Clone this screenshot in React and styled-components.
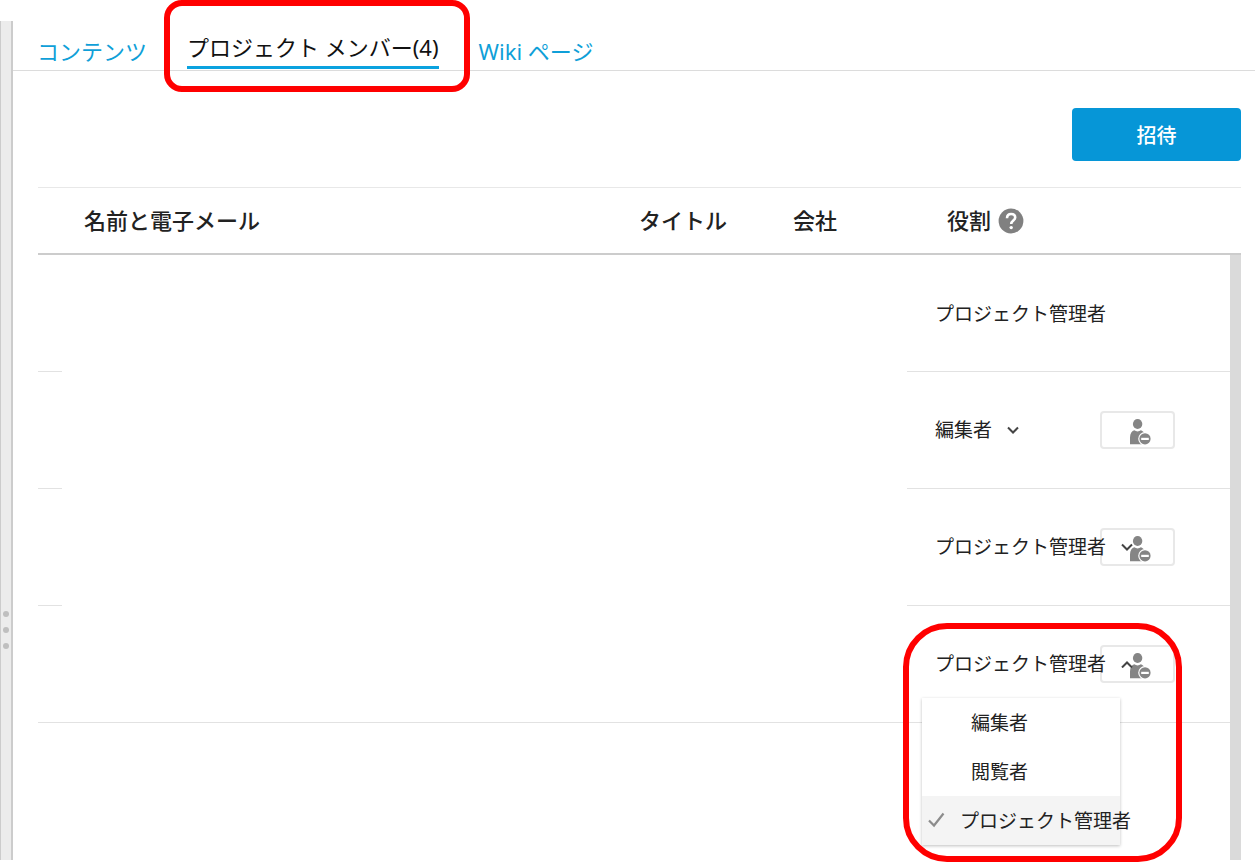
import { useState } from "react"
import styled, { createGlobalStyle, css } from "styled-components"

const ROLES = ["編集者", "閲覧者", "プロジェクト管理者"]

const MEMBERS = [
  { id: 1, role: "プロジェクト管理者", owner: true },
  { id: 2, role: "編集者" },
  { id: 3, role: "プロジェクト管理者" },
  { id: 4, role: "プロジェクト管理者", marked: true },
]

const Chevron = ({ up }) => (
  <svg width="12" height="8" viewBox="0 0 12 8" fill="none" stroke="#444" strokeWidth="2" aria-hidden="true">
    <path d={up ? "M1 7.5 L6 2.5 L11 7.5" : "M1 1.5 L6 6.5 L11 1.5"} />
  </svg>
)

const RemoveIcon = () => (
  <svg width="26" height="30" viewBox="0 0 26 30" aria-hidden="true">
    <ellipse cx="12.6" cy="9" rx="4.7" ry="5.1" fill="#858585" />
    <path d="M5 29.3 V22.5 C5 18.3 7 16 9.3 15.3 C11.2 16.8 14 16.8 15.9 15.3 C18 16 19.5 17.8 19.8 20 V29.3 Z" fill="#858585" />
    <circle cx="20" cy="23.8" r="6.8" fill="#fff" />
    <circle cx="20" cy="23.8" r="5.6" fill="#858585" />
    <rect x="16.2" y="22.8" width="7.6" height="2.2" fill="#fff" />
  </svg>
)

const HelpIcon = () => (
  <svg width="26" height="26" viewBox="0 0 26 26" aria-hidden="true">
    <circle cx="13" cy="13" r="12.4" fill="#808080" />
    <path d="M9 10.2 C9 7.4 10.6 6 13.1 6 C15.6 6 17.2 7.4 17.2 9.5 C17.2 12.4 13.2 12.6 13.2 16" fill="none" stroke="#fff" strokeWidth="2.6" />
    <circle cx="13.2" cy="19.6" r="1.7" fill="#fff" />
  </svg>
)

const CheckIcon = () => (
  <svg width="17" height="16" viewBox="0 0 17 16" fill="none" stroke="#8c8c8c" strokeWidth="2.2" aria-hidden="true">
    <path d="M1 8.5 L6 13.5 L15.5 1.5" />
  </svg>
)

const RolePicker = ({ member, open, onToggle, onPick }) => (
  <Picker>
    <PickerLabel>
      <RoleSelect
        aria-label="役割"
        value={member.role}
        onMouseDown={(e) => {
          e.preventDefault()
          onToggle()
        }}
        onChange={(e) => onPick(e.target.value)}
      >
        {ROLES.map((role) => <option key={role}>{role}</option>)}
      </RoleSelect>
      <Chevron up={open} />
    </PickerLabel>
    {open && (
      <Menu role="listbox" aria-label="役割">
        {ROLES.map((role) => (
          <li key={role}>
            <MenuItem
              type="button"
              role="option"
              aria-selected={role === member.role}
              $selected={role === member.role}
              onClick={() => onPick(role)}
            >
              {role === member.role && <CheckIcon />}
              {role}
            </MenuItem>
          </li>
        ))}
      </Menu>
    )}
  </Picker>
)

const Columns = () => (
  <colgroup>
    <Col $width={24} />
    <Col />
    <Col $width={154} />
    <Col $width={136} />
    <Col $width={323} />
  </colgroup>
)

const App = () => {
  const [members, setMembers] = useState(MEMBERS)
  const [openId, setOpenId] = useState(4)

  const pick = (id, role) => {
    setMembers(members.map((m) => (m.id === id ? { ...m, role } : m)))
    setOpenId(null)
  }

  return (
    <>
      <GlobalStyle />
      <Page>
        <Splitter>
          <i />
          <i />
          <i />
        </Splitter>
        <Main>
          <Tabs>
            <Tab href="#contents">コンテンツ</Tab>
            <Tab href="#members" $active>
              プロジェクト メンバー({members.length})
              <TabMark />
            </Tab>
            <Tab href="#wiki">Wiki ページ</Tab>
          </Tabs>
          <Content>
            <Toolbar>
              <InviteButton type="button">招待</InviteButton>
            </Toolbar>
            <HeadWrap>
              <Table>
                <Columns />
                <thead>
                  <tr>
                    <HeadCell />
                    <HeadCell>名前と電子メール</HeadCell>
                    <HeadCell>タイトル</HeadCell>
                    <HeadCell>会社</HeadCell>
                    <HeadCell $wide>
                      <HeadLabel>
                        役割
                        <HelpButton type="button" aria-label="ヘルプ">
                          <HelpIcon />
                        </HelpButton>
                      </HeadLabel>
                    </HeadCell>
                  </tr>
                </thead>
              </Table>
            </HeadWrap>
            <BodyWrap>
              <Rows>
                <Table>
                  <Columns />
                  <tbody>
                    {members.map((m, i) => (
                      <tr key={m.id}>
                        <Cell $line />
                        <Cell $line={i === members.length - 1} />
                        <Cell $line={i === members.length - 1} />
                        <Cell $line={i === members.length - 1} />
                        <Cell $line>
                          <RoleRow>
                            {m.owner ? (
                              m.role
                            ) : (
                              <>
                                <RolePicker
                                  member={m}
                                  open={openId === m.id}
                                  onToggle={() => setOpenId(openId === m.id ? null : m.id)}
                                  onPick={(role) => pick(m.id, role)}
                                />
                                <RemoveButton type="button" aria-label="メンバーを削除">
                                  <RemoveIcon />
                                </RemoveButton>
                              </>
                            )}
                          </RoleRow>
                          {m.marked && <RoleMark />}
                        </Cell>
                      </tr>
                    ))}
                  </tbody>
                </Table>
              </Rows>
              <ScrollTrack />
            </BodyWrap>
          </Content>
        </Main>
      </Page>
    </>
  )
}

export default App

const GlobalStyle = createGlobalStyle`
* {
  box-sizing: border-box;
}

body {
  margin: 0;
  background: #fff;
  color: #222;
  font-family: "Noto Sans", "Noto Sans CJK JP", sans-serif;
  font-size: 19px;
}

button, select {
  font: inherit;
  color: inherit;
}
`

const Page = styled.div`
  display: flex;
  min-height: 100vh;
  padding: 21px 0 3px;
`

const Splitter = styled.div`
  display: flex;
  flex-direction: column;
  justify-content: flex-end;
  align-items: center;
  gap: 10px;
  flex: 0 0 13px;
  padding-bottom: 211px;
  background: #ececec;
  border-left: 1px solid #ccc;
  border-right: 2px solid #ccc;

  i {
    width: 6px;
    height: 6px;
    border-radius: 50%;
    background: #bfbfbf;
  }
`

const Main = styled.main`
  display: flex;
  flex-direction: column;
  flex: 1;
  min-width: 0;
`

const Tabs = styled.nav`
  display: flex;
  align-items: flex-end;
  gap: 40px;
  height: 50px;
  padding-left: 24px;
  border-bottom: 1px solid #dcdcdc;
`

const Tab = styled.a`
  position: relative;
  padding-bottom: 3px;
  color: #0f9fd8;
  font-size: 22px;
  line-height: 32px;
  white-space: nowrap;
  text-decoration: none;

  ${({ $active }) => $active && css`
    color: #111;
    border-bottom: 3px solid #0aa2df;
    margin-bottom: 1px;
  `}
`

/* red highlight frames */
const Mark = styled.span`
  position: absolute;
  border: 6px solid #f00;
  pointer-events: none;
`

const TabMark = styled(Mark)`
  inset: -31px -31px -26px -23px;
  border-radius: 18px;
`

const RoleMark = styled(Mark)`
  top: 17px;
  left: -4px;
  width: 279px;
  height: 239px;
  border-radius: 44px;
  z-index: 3;
`

const Content = styled.section`
  display: flex;
  flex-direction: column;
  flex: 1;
  padding: 0 14px 0 25px;
`

const Toolbar = styled.div`
  display: flex;
  justify-content: flex-end;
  padding: 37px 0 26px;
`

const InviteButton = styled.button`
  width: 169px;
  height: 53px;
  border: none;
  border-radius: 4px;
  background: #0696d7;
  color: #fff;
  font-size: 20px;
  font-weight: 500;
  cursor: pointer;
`

const Table = styled.table`
  width: 100%;
  table-layout: fixed;
  border-collapse: separate;
  border-spacing: 0;
`

const Col = styled.col`
  width: ${({ $width }) => ($width ? `${$width}px` : "auto")};
`

const HeadWrap = styled.div`
  padding-right: 11px;
  border-top: 1px solid #e8e8e8;
  border-bottom: 2px solid #ccc;
`

const HeadCell = styled.th`
  height: 65px;
  padding: 0 0 3px ${({ $wide }) => ($wide ? 40 : 22)}px;
  font-size: 22px;
  font-weight: 500;
  text-align: left;
  white-space: nowrap;
`

const HeadLabel = styled.span`
  display: flex;
  align-items: center;
  gap: 7px;
`

const HelpButton = styled.button`
  display: flex;
  padding: 3px 0 0;
  border: none;
  background: none;
  cursor: pointer;
`

const BodyWrap = styled.div`
  display: flex;
  flex: 1;
`

const Rows = styled.div`
  flex: 1;
  min-width: 0;
`

const ScrollTrack = styled.div`
  flex: 0 0 11px;
  background: #dadada;
`

const Cell = styled.td`
  position: relative;
  height: 117px;
  padding: 0;
  border-bottom: 1px solid ${({ $line }) => ($line ? "#e2e2e2" : "transparent")};
`

const RoleRow = styled.div`
  display: flex;
  align-items: center;
  height: 38px;
  padding-left: 28px;
`

const Picker = styled.div`
  position: relative;
  flex: 0 0 165px;
  min-width: 0;
  z-index: 1;
`

const PickerLabel = styled.label`
  display: flex;
  align-items: center;
  gap: 15px;
  width: max-content;
  height: 38px;
`

const RoleSelect = styled.select`
  appearance: none;
  field-sizing: content;
  padding: 0;
  border: none;
  background: none;
  cursor: pointer;
`

const Menu = styled.ul`
  position: absolute;
  top: calc(100% + 15px);
  left: -13px;
  z-index: 2;
  width: 198px;
  margin: 0;
  padding: 0;
  list-style: none;
  background: #fff;
  box-shadow: 0 1px 3px rgba(0, 0, 0, 0.25);
`

const MenuItem = styled.button`
  display: flex;
  align-items: center;
  gap: 15px;
  width: 100%;
  height: 49px;
  padding: 0 0 2px ${({ $selected }) => ($selected ? 6 : 49)}px;
  border: none;
  background: ${({ $selected }) => ($selected ? "#f4f4f4" : "#fff")};
  white-space: nowrap;
  cursor: pointer;

  svg {
    flex: none;
  }
`

const RemoveButton = styled.button`
  display: flex;
  align-items: center;
  justify-content: center;
  width: 75px;
  height: 38px;
  padding: 0;
  border: 2px solid #e8e8e8;
  border-radius: 4px;
  background: #fff;
  cursor: pointer;
`
